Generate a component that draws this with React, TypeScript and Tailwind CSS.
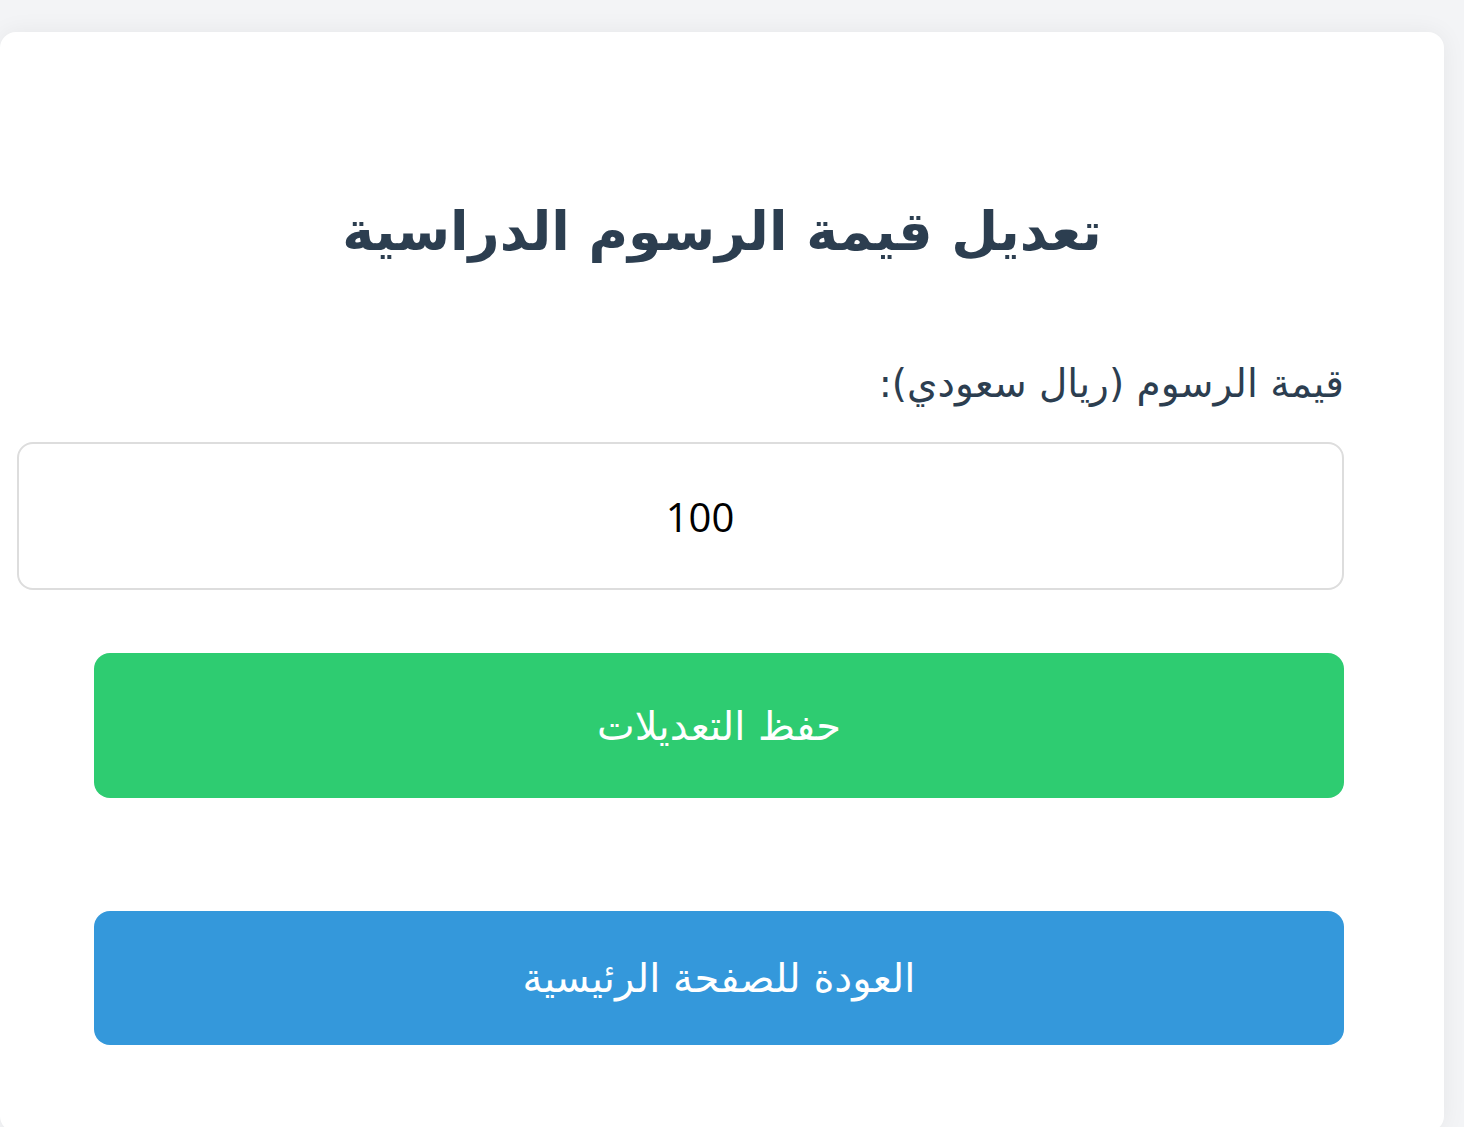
const App = () => {
  return (
    <div className="min-h-screen bg-[#f3f4f6] pt-8 font-['DejaVu_Sans',sans-serif] overflow-hidden">
      <div
        dir="rtl"
        className="w-[1444px] min-h-[1100px] bg-white rounded-2xl shadow-[0_0_24px_rgba(0,0,0,0.06)] pt-[160px] pr-[100px]"
      >
        <h1 className="-mr-[100px] text-center text-[54px] font-bold text-[#2c3e50] leading-[80px]">
          تعديل قيمة الرسوم الدراسية
        </h1>
        <form className="mt-[88px] flex flex-col">
          <label className="text-[39px] leading-[48px] text-[#2c3e50]">قيمة الرسوم (ريال سعودي):</label>
          <input
            type="number"
            defaultValue={100}
            dir="ltr"
            className="mt-[34px] ml-[17px] h-[148px] w-[1327px] rounded-2xl border-2 border-[#dddddd] pl-[54px] text-center font-['Open_Sans',sans-serif] text-[40px] text-black outline-none"
          />
          <button
            type="button"
            className="mt-[63px] h-[145px] w-[1250px] rounded-2xl bg-[#2ecc71] text-[40px] text-white"
          >
            حفظ التعديلات
          </button>
          <button
            type="button"
            className="mt-[113px] h-[134px] w-[1250px] rounded-2xl bg-[#3498db] text-[40px] text-white"
          >
            العودة للصفحة الرئيسية
          </button>
        </form>
      </div>
    </div>
  );
};

export default App;
